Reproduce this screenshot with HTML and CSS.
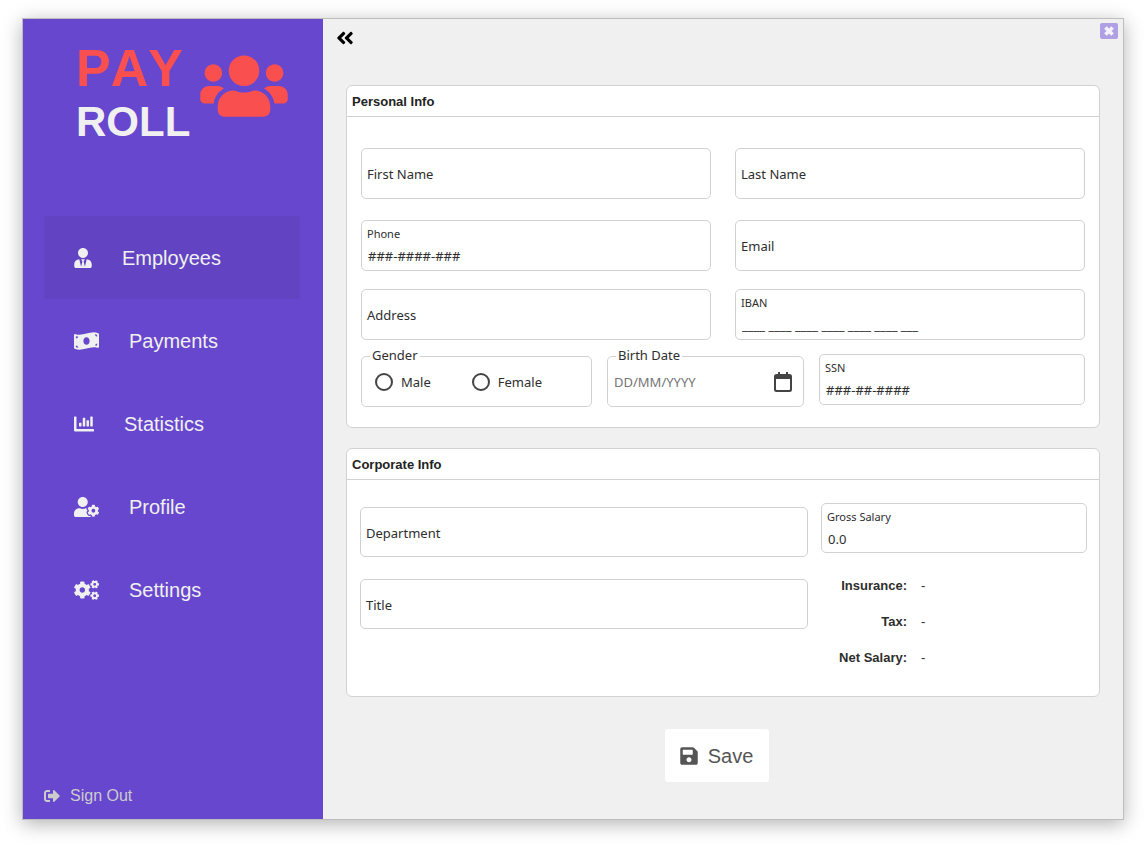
FILE: index.html
```html
<!DOCTYPE html>
<html lang="en">
<head>
<meta charset="utf-8">
<meta name="viewport" content="width=device-width, initial-scale=1">
<title>Payroll</title>
<link rel="stylesheet" href="styles.css">
</head>
<body>
<svg class="defs" aria-hidden="true">
  <defs>
    <path id="gear" fill-rule="evenodd" d="M610.5 373.3c2.6-14.1 2.6-28.5 0-42.6l25.8-14.9c3-1.7 4.3-5.2 3.3-8.5-6.7-21.6-18.2-41.2-33.2-57.4-2.3-2.5-6-3.1-9-1.4l-25.8 14.9c-10.9-9.3-23.4-16.5-36.9-21.3v-29.8c0-3.4-2.4-6.4-5.7-7.1-22.3-5-45-4.8-66.2 0-3.3.7-5.7 3.7-5.7 7.1v29.8c-13.5 4.8-26 12-36.9 21.3l-25.8-14.9c-2.9-1.7-6.7-1.1-9 1.4-15 16.2-26.5 35.8-33.2 57.4-1 3.3.4 6.8 3.3 8.5l25.8 14.9c-2.6 14.1-2.6 28.5 0 42.6l-25.8 14.9c-3 1.7-4.3 5.2-3.3 8.5 6.7 21.6 18.2 41.1 33.2 57.4 2.3 2.5 6 3.1 9 1.4l25.8-14.9c10.9 9.3 23.4 16.5 36.9 21.3v29.8c0 3.4 2.4 6.4 5.7 7.1 22.3 5 45 4.8 66.2 0 3.3-.7 5.7-3.7 5.7-7.1v-29.8c13.5-4.8 26-12 36.9-21.3l25.8 14.9c2.9 1.7 6.7 1.1 9-1.4 15-16.2 26.5-35.8 33.2-57.4 1-3.3-.4-6.8-3.3-8.5l-25.8-14.9zM496 400.5c-26.8 0-48.5-21.8-48.5-48.5s21.8-48.5 48.5-48.5 48.5 21.8 48.5 48.5-21.7 48.5-48.5 48.5z"/>
  </defs>
</svg>
<div class="window">
  <aside class="sidebar">
    <div class="brand">
      <div class="brand-name">
        <span class="brand-pay">PAY</span>
        <span class="brand-roll">ROLL</span>
      </div>
      <svg class="brand-icon" viewBox="0 0 640 512" aria-hidden="true"><path d="M96 224c35.3 0 64-28.7 64-64s-28.7-64-64-64-64 28.7-64 64 28.7 64 64 64zm448 0c35.3 0 64-28.7 64-64s-28.7-64-64-64-64 28.7-64 64 28.7 64 64 64zm32 32h-64c-17.6 0-33.5 7.1-45.1 18.6 40.3 22.1 68.9 62 75.1 109.4h66c17.7 0 32-14.3 32-32v-32c0-35.3-28.7-64-64-64zm-256 0c61.9 0 112-50.1 112-112S381.9 32 320 32 208 82.1 208 144s50.1 112 112 112zm76.8 32h-8.3c-20.8 10-43.9 16-68.5 16s-47.6-6-68.5-16h-8.3C179.6 288 128 339.6 128 403.2V432c0 26.5 21.5 48 48 48h288c26.5 0 48-21.5 48-48v-28.8c0-63.6-51.6-115.2-115.2-115.2zm-223.7-13.4C161.5 263.1 145.6 256 128 256H64c-35.3 0-64 28.7-64 64v32c0 17.7 14.3 32 32 32h65.9c6.3-47.4 34.9-87.3 75.2-109.4z"/></svg>
    </div>
    <nav class="nav">
      <a class="nav-item active" href="#employees">
        <svg class="nav-icon narrow" viewBox="0 0 448 512" aria-hidden="true"><path d="M224 256c70.7 0 128-57.3 128-128S294.7 0 224 0 96 57.3 96 128s57.3 128 128 128zm95.800 32.600L272 480l-32-136 32-56h-96l32 56-32 136-47.800-191.400C56.900 292 0 350.300 0 422.400V464c0 26.500 21.500 48 48 48h352c26.500 0 48-21.500 48-48v-41.600c0-72.100-56.900-130.400-128.200-133.800z"/></svg>
        Employees
      </a>
      <a class="nav-item" href="#payments">
        <svg class="nav-icon wide" viewBox="0 0 640 512" aria-hidden="true"><path d="M621.16 54.46C582.37 38.19 543.55 32 504.75 32c-123.17-.01-246.33 62.34-369.5 62.34-30.89 0-61.76-3.92-92.65-13.72-3.47-1.1-6.95-1.62-10.35-1.62C15.04 79 0 92.32 0 110.81v317.26c0 12.63 7.23 24.6 18.84 29.46C57.63 473.81 96.45 480 135.25 480c123.17 0 246.34-62.35 369.51-62.35 30.89 0 61.76 3.92 92.65 13.72 3.47 1.1 6.95 1.62 10.35 1.62 17.21 0 32.25-13.32 32.25-31.81V83.93c-.01-12.64-7.24-24.6-18.85-29.47zM48 132.22c20.12 5.04 41.12 7.57 62.72 8.93C104.84 170.54 79 192.69 48 192.69v-60.47zm0 285v-47.78c34.37 0 62.18 27.27 63.71 61.4-22.53-1.81-43.59-6.31-63.71-13.62zM320 352c-44.19 0-80-42.99-80-96 0-53.02 35.82-96 80-96s80 42.98 80 96c0 53.03-35.83 96-80 96zm272 27.78c-17.52-4.39-35.71-6.85-54.32-8.44 5.87-26.08 27.5-45.88 54.32-49.28v57.72zm0-236.11c-30.89-3.91-54.86-29.7-55.81-61.55 19.54 2.17 38.09 6.23 55.81 12.66v48.89z"/></svg>
        Payments
      </a>
      <a class="nav-item" href="#statistics">
        <svg class="nav-icon" viewBox="0 0 512 512" aria-hidden="true"><path d="M332.8 320h38.4c6.4 0 12.8-6.4 12.8-12.8V172.8c0-6.4-6.4-12.8-12.8-12.8h-38.4c-6.4 0-12.8 6.4-12.8 12.8v134.4c0 6.4 6.4 12.8 12.8 12.8zm96 0h38.4c6.4 0 12.8-6.4 12.8-12.8V76.8c0-6.4-6.4-12.8-12.8-12.8h-38.4c-6.4 0-12.8 6.4-12.8 12.8v230.4c0 6.4 6.4 12.8 12.8 12.8zm-288 0h38.4c6.4 0 12.8-6.4 12.8-12.8v-70.4c0-6.4-6.4-12.8-12.8-12.8h-38.4c-6.4 0-12.8 6.4-12.8 12.8v70.4c0 6.4 6.4 12.8 12.8 12.8zm96 0h38.4c6.4 0 12.8-6.4 12.8-12.8V108.8c0-6.4-6.4-12.8-12.8-12.8h-38.4c-6.4 0-12.8 6.4-12.8 12.8v198.4c0 6.4 6.4 12.8 12.8 12.8zM496 384H64V80c0-8.84-7.16-16-16-16H16C7.16 64 0 71.16 0 80v336c0 17.67 14.33 32 32 32h464c8.84 0 16-7.16 16-16v-32c0-8.84-7.16-16-16-16z"/></svg>
        Statistics
      </a>
      <a class="nav-item" href="#profile">
        <svg class="nav-icon wide" viewBox="0 0 640 512" aria-hidden="true"><use href="#gear"/><path d="M224 256c70.7 0 128-57.3 128-128S294.7 0 224 0 96 57.3 96 128s57.3 128 128 128zm201.2 226.5c-2.3-1.2-4.6-2.6-6.8-3.9l-7.9 4.6c-6 3.4-12.8 5.3-19.6 5.3-10.9 0-21.4-4.6-28.9-12.6-18.3-19.8-32.3-43.9-40.2-69.6-5.5-17.7 1.9-36.4 17.9-45.7l7.9-4.6c-.1-2.6-.1-5.2 0-7.8l-7.9-4.6c-16-9.2-23.4-28-17.9-45.7.9-2.9 2.2-5.8 3.2-8.7-3.8-.3-7.5-1.2-11.4-1.2h-16.7c-22.2 10.2-46.9 16-72.9 16s-50.6-5.8-72.9-16h-16.7C60.2 288 0 348.2 0 422.4V464c0 26.5 21.5 48 48 48h352c10.1 0 19.5-3.2 27.2-8.5-1.2-3.8-2-7.7-2-11.8v-9.2z"/></svg>
        Profile
      </a>
      <a class="nav-item" href="#settings">
        <svg class="nav-icon wide" viewBox="0 0 640 512" aria-hidden="true">
          <use href="#gear" transform="translate(213 256) scale(1.45) translate(-496 -352)"/>
          <use href="#gear" transform="translate(530 110) rotate(30) scale(.74) translate(-496 -352)"/>
          <use href="#gear" transform="translate(530 402) rotate(30) scale(.74) translate(-496 -352)"/>
        </svg>
        Settings
      </a>
    </nav>
    <button class="sign-out" type="button">
      <svg class="sign-out-icon" viewBox="0 0 512 512" aria-hidden="true"><path d="M497 273L329 441c-15 15-41 4.5-41-17v-96H152c-13.3 0-24-10.7-24-24v-96c0-13.3 10.7-24 24-24h136V88c0-21.4 25.9-32 41-17l168 168c9.3 9.4 9.3 24.6 0 34zM192 436v-40c0-6.600-5.400-12-12-12H96c-17.700 0-32-14.300-32-32V160c0-17.700 14.300-32 32-32h84c6.600 0 12-5.400 12-12V76c0-6.600-5.400-12-12-12H96c-53 0-96 43-96 96v192c0 53 43 96 96 96h84c6.600 0 12-5.400 12-12z"/></svg>
      Sign Out
    </button>
  </aside>

  <main class="main">
    <header class="topbar">
      <button class="collapse" type="button" aria-label="Collapse menu">
        <svg viewBox="0 0 448 512" aria-hidden="true"><path d="M223.7 239l136-136c9.4-9.4 24.6-9.4 33.9 0l22.6 22.6c9.4 9.4 9.4 24.6 0 33.9L319.9 256l96.4 96.4c9.4 9.4 9.4 24.6 0 33.900L393.700 409c-9.400 9.400-24.600 9.400-33.900 0l-136-136c-9.500-9.400-9.500-24.600-.1-34zm-192 34l136 136c9.400 9.400 24.600 9.400 33.900 0l22.600-22.600c9.400-9.400 9.400-24.600 0-33.900L127.900 256l96.400-96.400c9.400-9.400 9.400-24.600 0-33.900L201.700 103c-9.400-9.400-24.600-9.400-33.900 0l-136 136c-9.500 9.400-9.500 24.600-.1 34z"/></svg>
      </button>
      <button class="close" type="button" aria-label="Close">
        <svg viewBox="0 0 10 10" aria-hidden="true"><path d="M2 2l6 6M8 2l-6 6"/></svg>
      </button>
    </header>

    <form class="form">
      <section class="card">
        <h2 class="card-title">Personal Info</h2>
        <div class="card-body personal">
          <div class="pair">
            <div class="field"><label for="first">First Name</label><input id="first" type="text"></div>
            <div class="field"><label for="last">Last Name</label><input id="last" type="text"></div>
          </div>
          <div class="pair spaced-large">
            <div class="field filled"><label for="phone">Phone</label><input id="phone" type="text" value="###-####-###"></div>
            <div class="field"><label for="email">Email</label><input id="email" type="text"></div>
          </div>
          <div class="pair spaced">
            <div class="field"><label for="address">Address</label><input id="address" type="text"></div>
            <div class="field filled"><label for="iban">IBAN</label><input id="iban" type="text" value="____ ____ ____ ____ ____ ____ ___"></div>
          </div>
          <div class="details">
            <fieldset class="group">
              <legend>Gender</legend>
              <div class="radios">
                <label class="radio"><input type="radio" name="gender">Male</label>
                <label class="radio"><input type="radio" name="gender">Female</label>
              </div>
            </fieldset>
            <fieldset class="group">
              <legend><label for="birth">Birth Date</label></legend>
              <div class="date">
                <input id="birth" type="text" placeholder="DD/MM/YYYY">
                <button type="button" aria-label="Open calendar">
                  <svg viewBox="0 0 18 20" aria-hidden="true"><path fill-rule="evenodd" d="M4 0h2v2h6V0h2v2h1.500A2.500 2.500 0 0 1 18 4.500v13a2.500 2.500 0 0 1-2.500 2.500h-13A2.500 2.500 0 0 1 0 17.500v-13A2.500 2.500 0 0 1 2.500 2H4zM2 7v10.200a.8.8 0 0 0 .8.8h12.400a.8.8 0 0 0 .8-.8V7z"/></svg>
                </button>
              </div>
            </fieldset>
            <div class="field filled ssn"><label for="ssn">SSN</label><input id="ssn" type="text" value="###-##-####"></div>
          </div>
        </div>
      </section>

      <section class="card">
        <h2 class="card-title">Corporate Info</h2>
        <div class="card-body corporate">
          <div class="job">
            <div class="field compact"><label for="department">Department</label><input id="department" type="text"></div>
            <div class="field compact"><label for="title">Title</label><input id="title" type="text"></div>
          </div>
          <div class="pay">
            <div class="field filled compact"><label for="gross">Gross Salary</label><input id="gross" type="text" value="0.0"></div>
            <dl class="totals">
              <dt>Insurance:</dt><dd>-</dd>
              <dt>Tax:</dt><dd>-</dd>
              <dt>Net Salary:</dt><dd>-</dd>
            </dl>
          </div>
        </div>
      </section>

      <div class="actions">
        <button class="save" type="submit">
          <svg viewBox="0 0 448 512" aria-hidden="true"><path d="M433.941 129.941l-83.882-83.882A48 48 0 0 0 316.118 32H48C21.490 32 0 53.490 0 80v352c0 26.510 21.490 48 48 48h352c26.510 0 48-21.490 48-48V163.882a48 48 0 0 0-14.059-33.941zM224 416c-35.346 0-64-28.654-64-64 0-35.346 28.654-64 64-64s64 28.654 64 64c0 35.346-28.654 64-64 64zm96-304.520V212c0 6.627-5.373 12-12 12H76c-6.627 0-12-5.373-12-12V108c0-6.627 5.373-12 12-12h228.520c3.183 0 6.235 1.264 8.485 3.515l3.480 3.480A11.996 11.996 0 0 1 320 111.480z"/></svg>
          Save
        </button>
      </div>
    </form>
  </main>
</div>
</body>
</html>
```

FILE: styles.css
```css
* {
  box-sizing: border-box;
}

body {
  margin: 0;
  padding: 18px 22px 26px;
  min-height: 100vh;
  display: flex;
  background: #fff;
  color: #2e2e2e;
  font-family: "Noto Sans", sans-serif;
  font-size: 13px;
  line-height: 16px;
}

button,
input {
  margin: 0;
  padding: 0;
  border: 0;
  background: none;
  color: inherit;
  font: inherit;
}

button {
  cursor: pointer;
}

svg {
  display: block;
  flex: none;
  fill: currentColor;
}

.defs {
  position: absolute;
  width: 0;
  height: 0;
}

.window {
  flex: 1;
  display: flex;
  border: 1px solid #bebebe;
  background: #f0f0f0;
  box-shadow: 0 4px 18px rgba(0, 0, 0, 0.3);
}

/* Sidebar */

.sidebar {
  flex: 0 0 300px;
  display: flex;
  flex-direction: column;
  background: #6747cd;
  color: #f0f0f0;
  font-family: "Liberation Sans", Arial, sans-serif;
}

.brand {
  display: flex;
  gap: 8px;
  padding: 20px 35px 0 53px;
}

.brand-name {
  flex: 1;
  display: flex;
  flex-direction: column;
  font-weight: bold;
  font-kerning: none;
}

.brand-pay {
  color: #fa4f4f;
  font-size: 52px;
  line-height: 58px;
}

.brand-roll {
  font-size: 42px;
  line-height: 50px;
}

.brand-icon {
  width: 88px;
  height: 70px;
  margin-top: 12px;
  color: #fa4f4f;
}

.nav {
  display: flex;
  flex-direction: column;
  padding: 69px 23px 0 21px;
}

.nav-item {
  display: flex;
  align-items: center;
  gap: 30px;
  height: 83px;
  padding-left: 30px;
  border-radius: 3px;
  color: inherit;
  font-size: 20px;
  line-height: 24px;
  text-decoration: none;
}

.nav-item.active {
  background: #6244c3;
}

.nav-icon {
  width: 20px;
  height: 20px;
}

.nav-icon.narrow {
  width: 18px;
}

.nav-icon.wide {
  width: 25px;
}

.sign-out {
  display: flex;
  align-items: center;
  align-self: flex-start;
  gap: 10px;
  margin: auto 0 13px 21px;
  color: #cccccc;
  font-size: 16px;
  line-height: 20px;
}

.sign-out-icon {
  width: 16px;
  height: 16px;
}

/* Main area */

.main {
  flex: 1;
  min-width: 0;
}

.topbar {
  display: flex;
  align-items: flex-start;
  justify-content: space-between;
  height: 66px;
  padding: 4px 5px 0 13px;
}

.collapse {
  margin-top: 5px;
  color: #000;
}

.collapse svg {
  width: 18px;
  height: 20px;
}

.close {
  display: grid;
  place-items: center;
  width: 18px;
  height: 16px;
  border-radius: 2px;
  background: #b19fe3;
}

.close svg {
  width: 12px;
  height: 12px;
  fill: none;
  stroke: #f4f1fc;
  stroke-width: 3;
}

.form {
  display: flex;
  flex-direction: column;
  gap: 20px;
  padding: 0 23px 37px;
}

.card {
  border: 1px solid #d2d2d2;
  border-radius: 6px;
  background: #fff;
}

.card-title {
  margin: 0;
  padding: 8px 5px 6px;
  border-bottom: 1px solid #d2d2d2;
  color: #222;
  font: bold 13px/16px "Liberation Sans", Arial, sans-serif;
}

.card-body.personal {
  padding: 31px 14px 20px;
}

.card-body.corporate {
  display: grid;
  grid-template-columns: 448fr 266fr;
  gap: 13px;
  padding: 23px 12px 20px 13px;
}

.pair {
  display: grid;
  grid-template-columns: 1fr 1fr;
  gap: 24px;
}

.spaced-large {
  margin-top: 21px;
}

.spaced {
  margin-top: 18px;
}

.field {
  display: flex;
  align-items: center;
  gap: 8px;
  height: 51px;
  padding: 0 5px;
  border: 1px solid #d2d2d2;
  border-radius: 5px;
}

.field.compact {
  height: 50px;
  padding-top: 2px;
}

.field input {
  flex: 1;
  min-width: 0;
}

.field.filled {
  flex-direction: column;
  align-items: stretch;
  gap: 4px;
  padding-top: 5px;
}

.field.filled label {
  font-size: 11px;
}

.field.filled input {
  flex: none;
  height: 20px;
  padding-left: 1px;
}

.details {
  display: grid;
  grid-template-columns: 231fr 197fr 266fr;
  align-items: start;
  gap: 15px;
  margin-top: 7px;
}

.group {
  min-width: 0;
  margin: 0;
  padding: 0 6px 7px;
  border: 1px solid #d2d2d2;
  border-radius: 5px;
}

.group legend {
  margin-left: 2px;
  padding: 0 2px 2px;
}

.radios,
.date {
  display: flex;
  align-items: center;
  height: 34px;
}

.radios {
  gap: 41px;
  padding-left: 7px;
}

.radio {
  display: flex;
  align-items: center;
  gap: 8px;
}

.radio input {
  appearance: none;
  width: 18px;
  height: 18px;
  border: 2px solid #444;
  border-radius: 50%;
}

.date input {
  flex: 1;
  min-width: 0;
}

.date input::placeholder {
  color: #757575;
  opacity: 1;
}

.date button {
  margin-right: 5px;
  color: #444;
}

.date svg {
  width: 18px;
  height: 20px;
}

.ssn {
  margin-top: 7px;
}

.job {
  display: flex;
  flex-direction: column;
  gap: 22px;
  padding-top: 4px;
}

.totals {
  display: grid;
  grid-template-columns: 86px 1fr;
  column-gap: 14px;
  margin: 15px 0 0;
  font-family: "Liberation Sans", Arial, sans-serif;
  line-height: 36px;
}

.totals dt {
  font-weight: bold;
  text-align: right;
}

.totals dd {
  margin: 0;
}

.actions {
  display: flex;
  justify-content: center;
  padding: 12px 12px 0 0;
}

.save {
  display: flex;
  align-items: center;
  gap: 10px;
  height: 53px;
  padding: 0 16px 0 15px;
  border-radius: 3px;
  background: #fff;
  color: #555;
  font: 20px/24px "Liberation Sans", Arial, sans-serif;
}

.save svg {
  width: 18px;
  height: 20px;
}
```
